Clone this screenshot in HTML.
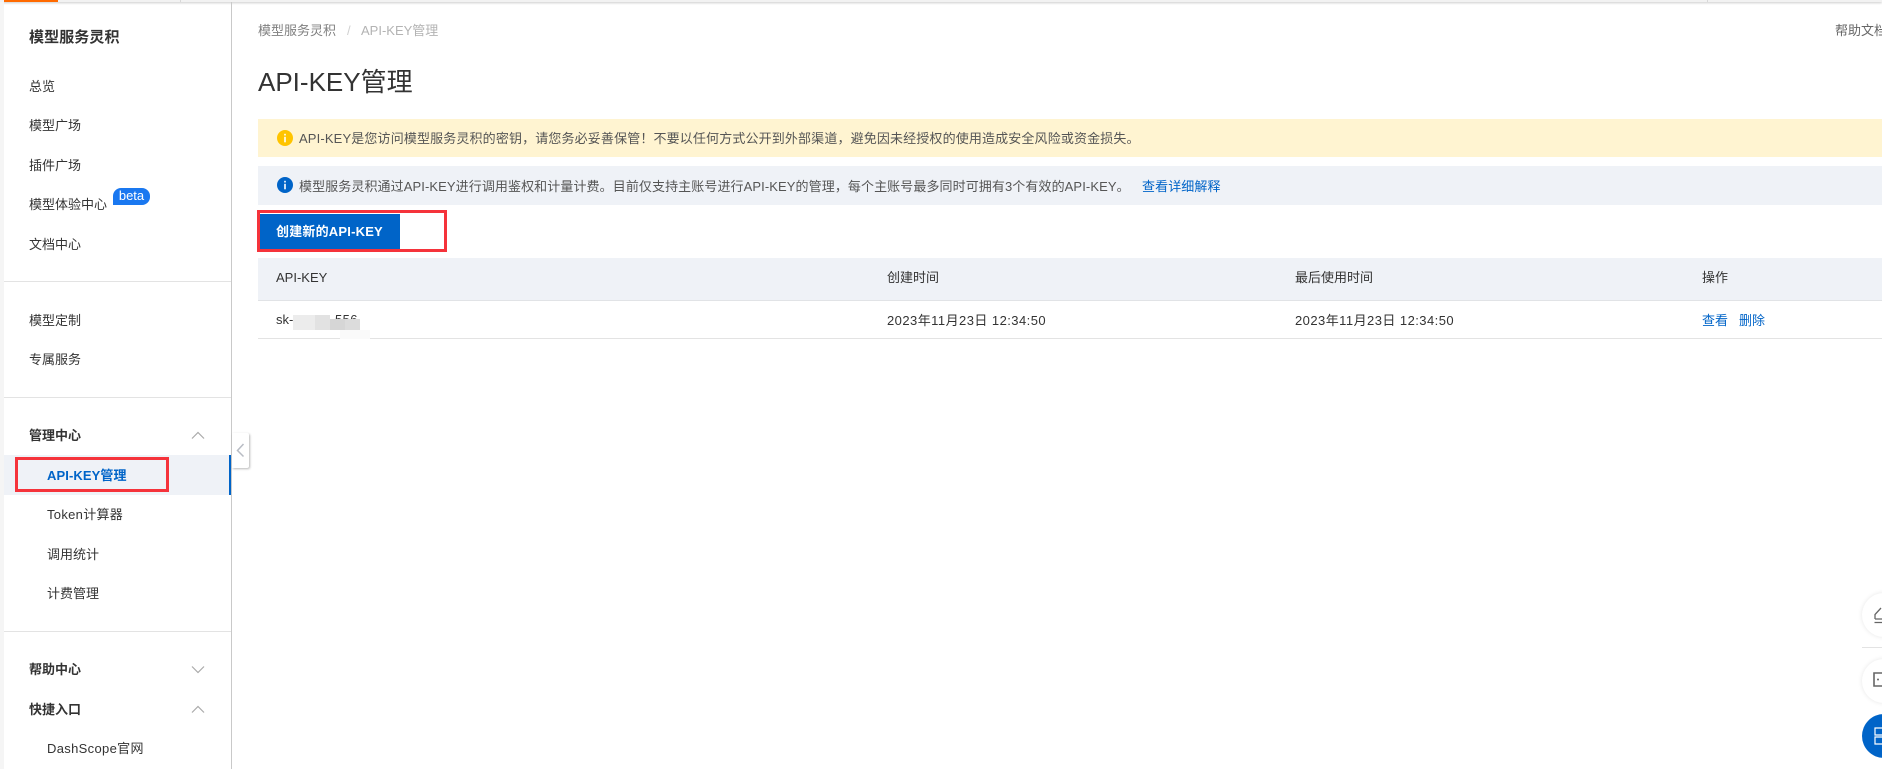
<!DOCTYPE html>
<html lang="zh-CN">
<head>
<meta charset="utf-8">
<title>API-KEY管理</title>
<style>
html,body{margin:0;padding:0;width:1882px;height:769px;overflow:hidden;background:#fff}
body{position:relative;font-family:"Liberation Sans","Noto Sans CJK SC",sans-serif;font-size:13px;color:#333}
.a{position:absolute;white-space:nowrap}
.t{position:absolute;white-space:nowrap;line-height:20px;height:20px}
.b{font-weight:700}
.hr{position:absolute;left:4px;width:227px;height:1px;background:#e3e3e3}
.blue{color:#0064c8}
</style>
</head>
<body>
<!-- top strip -->
<div class="a" style="left:0;top:0;width:1882px;height:2px;background:#f2f2f2;box-shadow:0 1px 2px rgba(0,0,0,.22)"></div>
<div class="a" style="left:4px;top:0;width:54px;height:2px;background:#ff6a00"></div>
<div class="a" style="left:180px;top:0;width:1px;height:2px;background:#d8d8d8"></div>
<div class="a" style="left:1707px;top:0;width:1px;height:2px;background:#d8d8d8"></div>
<!-- left strip -->
<div class="a" style="left:0;top:2px;width:4px;height:767px;background:#f5f5f5"></div>
<!-- sidebar border -->
<div class="a" style="left:231px;top:2px;width:1px;height:767px;background:#c9c9c9"></div>

<div class="t b" style="left:29px;top:28px;font-size:15px;letter-spacing:.1px;color:#333">模型服务灵积</div>
<div class="t" style="left:29px;top:77px">总览</div>
<div class="t" style="left:29px;top:116px">模型广场</div>
<div class="t" style="left:29px;top:156px">插件广场</div>
<div class="t" style="left:29px;top:195px">模型体验中心</div>
<div class="a" style="left:113px;top:188px;width:37px;height:17px;line-height:16px;border-radius:8px 8px 8px 0;background:#1a78f0;color:#fff;text-align:center;font-size:13px">beta</div>
<div class="t" style="left:29px;top:235px">文档中心</div>
<div class="hr" style="top:281px"></div>
<div class="t" style="left:29px;top:311px">模型定制</div>
<div class="t" style="left:29px;top:350px">专属服务</div>
<div class="hr" style="top:397px"></div>
<div class="t b" style="left:29px;top:426px">管理中心</div>
<svg class="a" style="left:191px;top:431px" width="14" height="9" viewBox="0 0 14 9"><path d="M1 7.5 7 1.5l6 6" fill="none" stroke="#aaa" stroke-width="1.2"/></svg>
<div class="a" style="left:4px;top:455px;width:225px;height:40px;background:#eff2f7"></div>
<div class="a" style="left:229px;top:455px;width:2px;height:40px;background:#0064c8"></div>
<div class="t b blue" style="left:47px;top:466px;letter-spacing:.1px">API-KEY管理</div>
<div class="a" style="left:15px;top:457px;width:148px;height:29px;border:3px solid #f5333b"></div>
<!-- collapse -->
<div class="a" style="left:232px;top:433px;width:17px;height:35px;background:#fff;box-shadow:1px 1px 2px rgba(0,0,0,.28);border-radius:0 2px 2px 0"></div>
<svg class="a" style="left:236px;top:443px" width="9" height="15" viewBox="0 0 9 15"><path d="M7.5 1 1.5 7.5l6 6" fill="none" stroke="#b8bcc4" stroke-width="1.5"/></svg>
<div class="t" style="left:47px;top:505px;letter-spacing:.3px">Token计算器</div>
<div class="t" style="left:47px;top:545px">调用统计</div>
<div class="t" style="left:47px;top:584px">计费管理</div>
<div class="hr" style="top:631px"></div>
<div class="t b" style="left:29px;top:660px">帮助中心</div>
<svg class="a" style="left:191px;top:665px" width="14" height="9" viewBox="0 0 14 9"><path d="M1 1.5 7 7.5l6-6" fill="none" stroke="#aaa" stroke-width="1.2"/></svg>
<div class="t b" style="left:29px;top:700px">快捷入口</div>
<svg class="a" style="left:191px;top:705px" width="14" height="9" viewBox="0 0 14 9"><path d="M1 7.5 7 1.5l6 6" fill="none" stroke="#aaa" stroke-width="1.2"/></svg>
<div class="t" style="left:47px;top:739px;letter-spacing:.33px">DashScope官网</div>

<!-- breadcrumb -->
<div class="t" style="left:258px;top:21px;color:#808080">模型服务灵积</div>
<div class="t" style="left:347px;top:21px;color:#d0d0d0">/</div>
<div class="t" style="left:361px;top:21px;color:#b3b3b3">API-KEY管理</div>
<div class="t" style="left:1835px;top:21px;color:#666">帮助文档</div>
<!-- title -->
<div class="a" style="left:258px;top:62px;font-size:26px;line-height:40px;color:#333">API-KEY管理</div>
<!-- alerts -->
<div class="a" style="left:258px;top:119px;width:1624px;height:38px;background:#fff4d1"></div>
<svg class="a" style="left:277px;top:130px" width="16" height="16" viewBox="0 0 16 16"><circle cx="8" cy="8" r="8" fill="#ffc400"/><rect x="7.2" y="6.8" width="1.6" height="5.5" fill="#fff"/><rect x="7.2" y="3.8" width="1.6" height="1.7" fill="#fff"/></svg>
<div class="t" style="left:299px;top:129px;color:#555;letter-spacing:.14px">API-KEY是您访问模型服务灵积的密钥，请您务必妥善保管！不要以任何方式公开到外部渠道，避免因未经授权的使用造成安全风险或资金损失。</div>
<div class="a" style="left:258px;top:166px;width:1624px;height:39px;background:#eff2f7"></div>
<svg class="a" style="left:277px;top:177px" width="16" height="16" viewBox="0 0 16 16"><circle cx="8" cy="8" r="8" fill="#0064c8"/><rect x="7.2" y="6.8" width="1.6" height="5.5" fill="#fff"/><rect x="7.2" y="3.8" width="1.6" height="1.7" fill="#fff"/></svg>
<div class="t" style="left:299px;top:177px;color:#555;letter-spacing:.09px">模型服务灵积通过API-KEY进行调用鉴权和计量计费。目前仅支持主账号进行API-KEY的管理，每个主账号最多同时可拥有3个有效的API-KEY。</div>
<div class="t blue" style="left:1142px;top:177px;letter-spacing:.1px">查看详细解释</div>
<!-- button -->
<div class="a" style="left:260px;top:214px;width:140px;height:35px;background:#0064c8"></div>
<div class="t b" style="left:276px;top:222px;color:#fff;letter-spacing:.2px">创建新的API-KEY</div>
<div class="a" style="left:257px;top:210px;width:184px;height:36px;border:3px solid #f5333b"></div>
<!-- table -->
<div class="a" style="left:258px;top:258px;width:1624px;height:42px;background:#eff2f7"></div>
<div class="a" style="left:258px;top:300px;width:1624px;height:1px;background:#e1e3e6"></div>
<div class="a" style="left:258px;top:338px;width:1624px;height:1px;background:#e3e3e3"></div>
<div class="t" style="left:276px;top:268px">API-KEY</div>
<div class="t" style="left:887px;top:268px">创建时间</div>
<div class="t" style="left:1295px;top:268px">最后使用时间</div>
<div class="t" style="left:1702px;top:268px">操作</div>
<div class="t" style="left:276px;top:310px">sk-</div>
<div class="t" style="left:335px;top:310px;letter-spacing:.4px">556</div>
<div class="a" style="left:293px;top:315px;width:22px;height:15px;background:#ececec"></div>
<div class="a" style="left:315px;top:315px;width:15px;height:15px;background:#e2e2e2"></div>
<div class="a" style="left:330px;top:319px;width:15px;height:11px;background:#d6d6d6"></div>
<div class="a" style="left:345px;top:319px;width:15px;height:11px;background:#dcdcdc"></div>
<div class="a" style="left:340px;top:330px;width:30px;height:9px;background:#fafafa"></div>
<div class="t" style="left:887px;top:311px;letter-spacing:.45px">2023年11月23日 12:34:50</div>
<div class="t" style="left:1295px;top:311px;letter-spacing:.45px">2023年11月23日 12:34:50</div>
<div class="t blue" style="left:1702px;top:311px">查看</div>
<div class="t blue" style="left:1739px;top:311px">删除</div>
<!-- floating -->
<div class="a" style="left:1862px;top:593px;width:44px;height:44px;border-radius:50%;background:#fff;box-shadow:0 0 5px rgba(0,0,0,.1)"></div>
<svg class="a" style="left:1874px;top:606px" width="8" height="18" viewBox="0 0 8 18"><path d="M1 13V8.5L7 2M.5 16.5H8M1 13H8" fill="none" stroke="#666" stroke-width="1.3"/></svg>
<div class="a" style="left:1862px;top:647px;width:20px;height:1px;background:#e3e3e3"></div>
<div class="a" style="left:1862px;top:659px;width:44px;height:44px;border-radius:50%;background:#fff;box-shadow:0 0 5px rgba(0,0,0,.1)"></div>
<svg class="a" style="left:1873px;top:672px" width="9" height="16" viewBox="0 0 9 16"><path d="M9 1H1V14H9" fill="none" stroke="#666" stroke-width="1.6"/><circle cx="5" cy="7.5" r="1" fill="#666"/></svg>
<div class="a" style="left:1862px;top:714px;width:44px;height:44px;border-radius:50%;background:#0064c8"></div>
<svg class="a" style="left:1874px;top:727px" width="8" height="18" viewBox="0 0 8 18"><path d="M8 1H1V8H8M8 10H1V17H8" fill="none" stroke="#fff" stroke-width="1.2"/></svg>
</body>
</html>
